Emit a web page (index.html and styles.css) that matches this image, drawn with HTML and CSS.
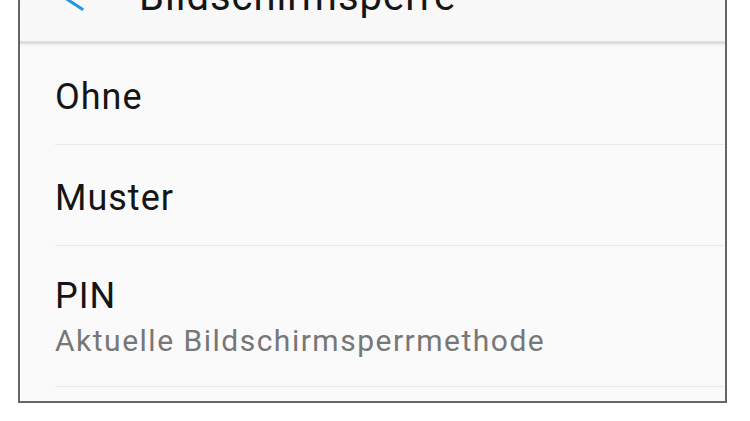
FILE: index.html
```html
<!DOCTYPE html>
<html lang="de">
<head>
    <meta charset="UTF-8">
    <meta name="viewport" content="width=device-width, initial-scale=1.0">
    <title>Bildschirmsperre</title>
    <link rel="stylesheet" href="styles.css">
</head>
<body>
    <div class="frame">
        <header class="topbar">
            <svg class="back" width="36" height="30" viewBox="0 0 36 30">
                <path d="M26 1 L12 14 L32 27" fill="none" stroke="#2196e3" stroke-width="3" stroke-linecap="square"/>
            </svg>
            <h1>Bildschirmsperre</h1>
        </header>
        <div class="list">
            <div class="row">
                <span class="label">Ohne</span>
            </div>
            <div class="row">
                <span class="label">Muster</span>
            </div>
            <div class="row two-line">
                <span class="label">PIN</span>
                <span class="sub">Aktuelle Bildschirmsperrmethode</span>
            </div>
        </div>
    </div>
</body>
</html>
```

FILE: styles.css
```css
body {
    margin: 0;
    padding: 0;
    background: #fff;
    font-family: 'Roboto', 'Open Sans', sans-serif;
    color: #1c1c1c;
    overflow: hidden;
}

.frame {
    margin-left: 18px;
    width: 709px;
    height: 403px;
    box-sizing: border-box;
    border: 2px solid #666;
    border-top: none;
    background: #fafafa;
    display: flex;
    flex-direction: column;
}

.topbar {
    height: 44px;
    box-sizing: border-box;
    display: flex;
    align-items: flex-end;
    padding-left: 30px;
    padding-bottom: 26px;
    background: #f8f8f8;
    border-bottom: 3px solid #dedede;
    box-shadow: 0 2px 2px rgba(0, 0, 0, 0.04);
}

.back {
    flex-shrink: 0;
    margin-bottom: 3px;
}

.topbar h1 {
    margin: 0 0 -2px 53px;
    font-size: 40px;
    font-weight: 400;
    line-height: 40px;
    letter-spacing: 1px;
    color: #151515;
}

.list {
    display: flex;
    flex-direction: column;
}

.row {
    margin-left: 35px;
    padding: 33px 0 27px;
    border-bottom: 1px solid #e9e9e9;
    display: flex;
    flex-direction: column;
}

.label {
    font-size: 36px;
    line-height: 40px;
    letter-spacing: 1px;
    color: #151515;
}

.two-line {
    padding-top: 30px;
    padding-bottom: 28px;
}

.sub {
    margin-top: 8px;
    font-size: 30px;
    line-height: 34px;
    letter-spacing: 1.5px;
    color: #777;
}
```
